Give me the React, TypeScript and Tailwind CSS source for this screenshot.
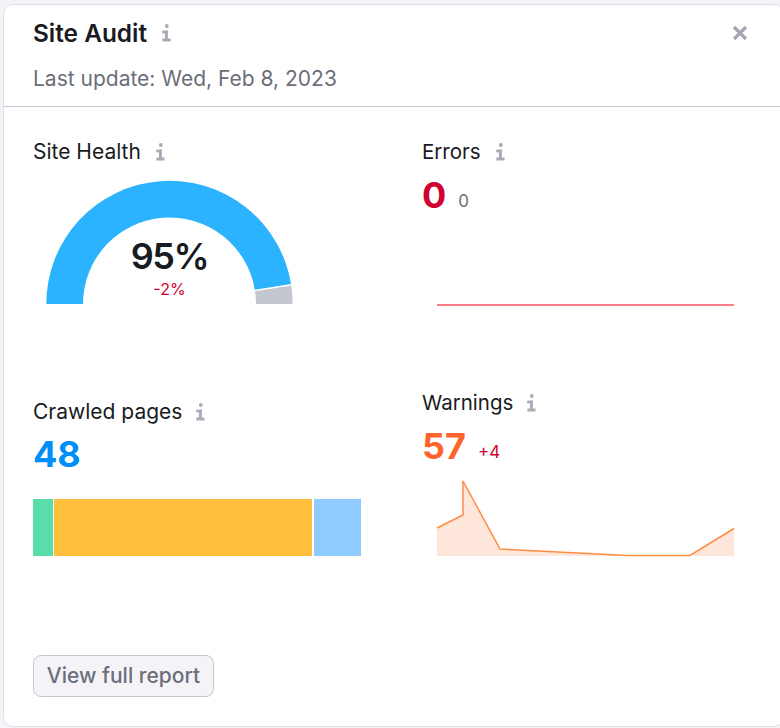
function InfoIcon({ className = "" }: { className?: string }) {
  return (
    <svg viewBox="0 0 10 18" className={`h-[18px] w-[10px] ${className}`} fill="#a9abb6">
      <circle cx="5.8" cy="2" r="1.9" />
      <path d="M1.2 6.8l5.7-.6v8.4h2.6v2.8H1.4v-2.8h2.5V9.2l-2.7.2z" />
    </svg>
  );
}

function Gauge() {
  const cx = 169.5 - 33;
  const cy = 124;
  const R = 123.2;
  const r = 86.5;
  const a = (171 * Math.PI) / 180;
  const ox = cx - R * Math.cos(a);
  const oy = cy - R * Math.sin(a);
  const ix = cx - r * Math.cos(a);
  const iy = cy - r * Math.sin(a);
  return (
    <svg width="328" height="125" viewBox="0 0 328 125" className="block">
      <path
        d={`M${cx - R} ${cy}A${R} ${R} 0 0 1 ${ox} ${oy}L${ix} ${iy}A${r} ${r} 0 0 0 ${cx - r} ${cy}Z`}
        fill="#2bb3ff"
      />
      <path
        d={`M${ox} ${oy}A${R} ${R} 0 0 1 ${cx + R} ${cy}L${cx + r} ${cy}A${r} ${r} 0 0 0 ${ix} ${iy}Z`}
        fill="#c4c7cf"
      />
      <line x1={ox} y1={oy} x2={ix} y2={iy} stroke="#ffffff" strokeWidth="1.5" />
    </svg>
  );
}

export default function App() {
  return (
    <div className="h-[728px] w-[780px] overflow-hidden bg-[#f4f4f8] pl-[3px] pt-[4px] font-['Inter',sans-serif]">
      <div className="h-[723px] w-[781px] rounded-[10px] border border-[#e0e1e9] bg-white">
        <div className="h-[102px] w-[776px] border-b border-[#c4c7cf] pl-[29px] pr-[30px] pt-[13px]">
          <div className="flex items-center justify-between">
            <div className="flex items-center gap-[14px]">
              <h1 className="text-[24.4px] leading-[30px] font-semibold text-[#191b23]">Site Audit</h1>
              <InfoIcon />
            </div>
            <svg viewBox="0 0 16 16" className="mr-[2px] h-[16px] w-[16px]">
              <path d="M2 2l12 12M14 2L2 14" stroke="#a4a6b1" strokeWidth="3.2" />
            </svg>
          </div>
          <p className="mt-[18px] text-[21px] leading-[26px] text-[#6c6e79]">Last update: Wed, Feb 8, 2023</p>
        </div>

        <div className="flex pl-[29px]">
          <div className="w-[389px]">
            <div className="mt-[32px] flex h-[26px] items-center gap-[14px] text-[21px] text-[#191b23]">
              <span>Site Health</span>
              <InfoIcon />
            </div>
            <div className="relative mt-[15px] w-[328px]">
              <Gauge />
              <div className="absolute left-0 top-[53px] flex w-[273px] flex-col items-center">
                <span className="text-[36px] leading-[46px] font-semibold tracking-[-1.5px] text-[#191b23]">95%</span>
                <span className="text-[16px] leading-[20px] text-[#d1002f]">-2%</span>
              </div>
            </div>
            <div className="mt-[94px] flex h-[26px] items-center gap-[13px] text-[21px] text-[#191b23]">
              <span>Crawled pages</span>
              <InfoIcon />
            </div>
            <div className="mt-[6px] text-[36px] leading-[46px] font-bold text-[#008ff8]">48</div>
            <div className="mt-[22px] flex h-[57px] w-[328px] gap-[1px]">
              <div className="w-[20px] bg-[#59ddaa]" />
              <div className="w-[259px] bg-[#ffbf3d]" />
              <div className="ml-[1px] w-[47px] bg-[#8fcbff]" />
            </div>
            <button className="mt-[99px] flex h-[42px] w-[181px] items-center justify-center rounded-[8px] border border-[#c4c7cf] bg-[#f4f4f8] text-[21px] font-medium text-[#6c6e79]">
              View full report
            </button>
          </div>

          <div className="w-[330px]">
            <div className="mt-[32px] flex h-[26px] items-center gap-[14px] text-[20.5px] text-[#191b23]">
              <span>Errors</span>
              <InfoIcon />
            </div>
            <div className="mt-[7px] flex h-[46px] items-center gap-[12px]">
              <span className="text-[36px] font-bold text-[#d1002f]">0</span>
              <span className="mt-[14px] text-[17px] text-[#6c6e79]">0</span>
            </div>
            <svg width="330" height="60" viewBox="0 0 330 60" className="mt-[28px] block">
              <line x1="15" y1="59" x2="312" y2="59" stroke="#ff7b85" strokeWidth="2" />
            </svg>
            <div className="mt-[84px] flex h-[26px] items-center gap-[13px] text-[20.5px] text-[#191b23]">
              <span>Warnings</span>
              <InfoIcon />
            </div>
            <div className="mt-[7px] flex h-[46px] items-center gap-[12px]">
              <span className="text-[36px] font-bold text-[#ff642d]">57</span>
              <span className="mt-[14px] text-[17px] text-[#d1002f]">+4</span>
            </div>
            <svg width="330" height="81" viewBox="0 0 330 81" className="mt-[7px] block">
              <path d="M15 52L41 39V5L78 73L205 80H268L312 52.5V80H15Z" fill="#ffe6da" />
              <path d="M15 52L41 39V5L78 73L205 79.5H268L312 52.5" fill="none" stroke="#ff8c43" strokeWidth="1.5" />
            </svg>
          </div>
        </div>
      </div>
    </div>
  );
}
